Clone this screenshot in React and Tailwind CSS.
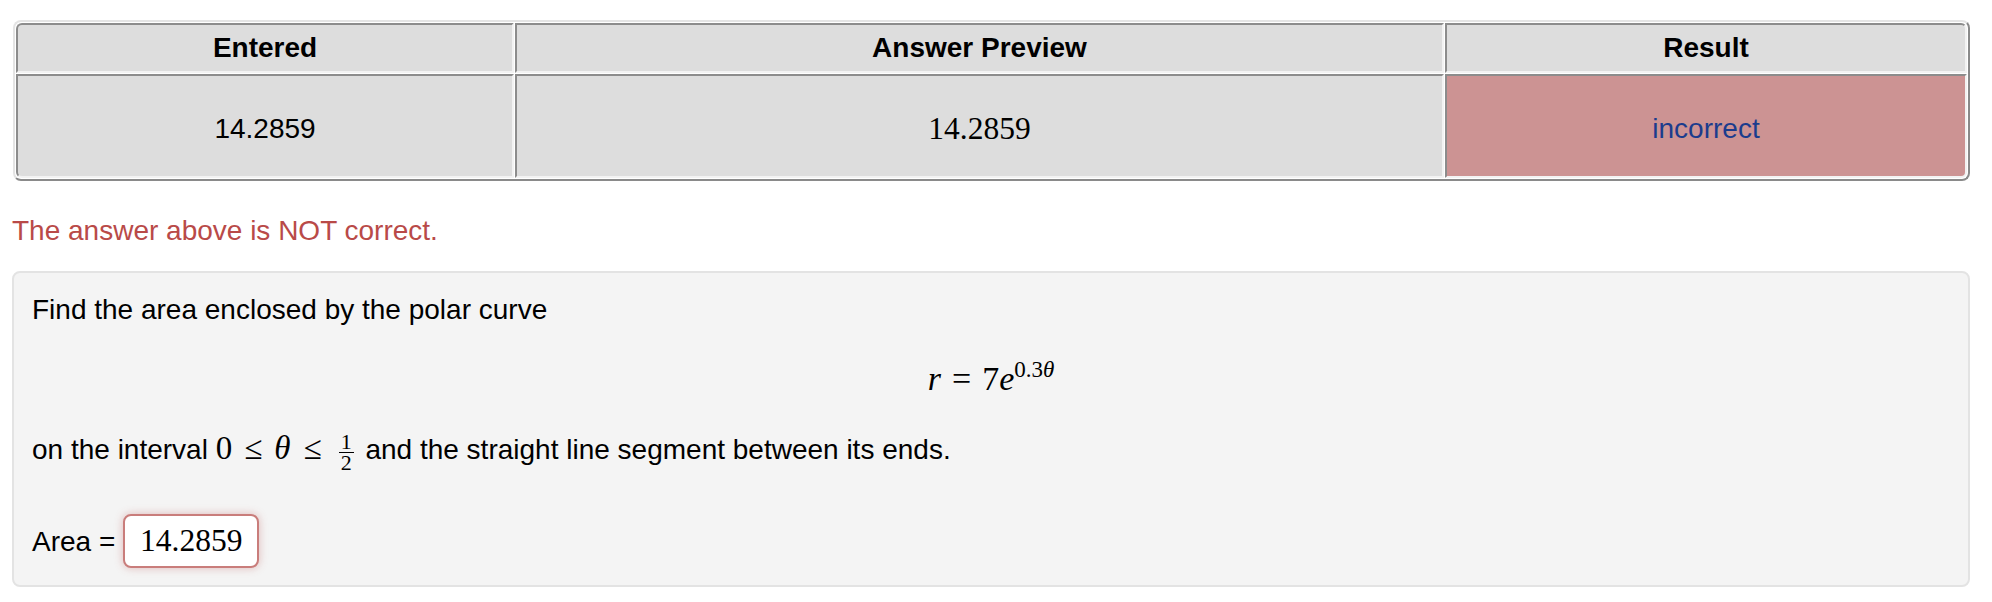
import React from 'react';

// attempt results + problem text, drawn at 2x scale
export default function App() {
  const cell =
    'border-2 border-t-[#8c8c8c] border-l-[#8c8c8c] border-r-[#f2f2f2] border-b-[#f2f2f2] bg-[#dddddd] text-center align-middle p-0';

  return (
    <div className="min-h-screen bg-white pt-[20px] pl-[12px] pr-[22px] font-['Liberation_Sans',Arial,sans-serif] text-[28px] leading-[40px] text-black">
      <table className="ml-[1px] w-[1957px] table-fixed border-separate border-spacing-[1px] rounded-[8px] border-2 border-t-[#e4e4e4] border-l-[#e4e4e4] border-r-[#8a8a8a] border-b-[#8a8a8a]">
        <thead>
          <tr>
            <th className={`${cell} w-[498px] h-[50px] font-bold rounded-tl-[6px]`}>Entered</th>
            <th className={`${cell} w-[929px] h-[50px] font-bold`}>Answer Preview</th>
            <th className={`${cell} h-[50px] font-bold rounded-tr-[6px]`}>Result</th>
          </tr>
        </thead>
        <tbody>
          <tr>
            <td className={`${cell} h-[104px] pt-[6px] rounded-bl-[6px]`}>14.2859</td>
            <td className={`${cell} h-[104px] pt-[6px] font-['Liberation_Serif',serif] text-[31.5px]`}>14.2859</td>
            <td className={`${cell} h-[104px] pt-[6px] !bg-[#cc9393] text-[#1b3c8d] rounded-br-[6px]`}>incorrect</td>
          </tr>
        </tbody>
      </table>

      <div className="mt-[30px] text-[#b94a48]">The answer above is NOT correct.</div>

      <div className="mt-[20px] rounded-[8px] border-2 border-[#e3e3e3] bg-[#f4f4f4] pt-[17px] pb-[17px] px-[18px]">
        <p>Find the area enclosed by the polar curve</p>

        <div className="mt-[19px] h-[60px] leading-[60px] text-center font-['Liberation_Serif',serif] text-[34px]">
          <span className="italic">r</span>
          <span className="mx-[11px]">=</span>
          <span>7</span>
          <span className="italic">e</span>
          <span className="relative -top-[13px] text-[23px]">
            0.3<span className="italic">θ</span>
          </span>
        </div>

        <p className="mt-[21px]">
          on the interval{' '}
          <span className="font-['Liberation_Serif',serif] text-[33px] leading-none">
            0<span className="mx-[12px]">≤</span>
            <span className="italic">θ</span>
            <span className="mx-[13px]">≤</span>
          </span>
          <span className="inline-flex flex-col items-center align-middle relative top-[1px] mx-[4px] font-['Liberation_Serif',serif] text-[22px] leading-[16px]">
            <span className="px-[2px] pb-[2px]">1</span>
            <span className="w-full border-t-[1.5px] border-black px-[2px] pt-[2px] text-center">2</span>
          </span>{' '}
          and the straight line segment between its ends.
        </p>

        <p className="mt-[44px]">
          Area ={' '}
          <span className="inline-block h-[54px] w-[136px] rounded-[8px] border-2 border-[#c97d7b] bg-white pl-[15px] font-['Liberation_Serif',serif] text-[31.5px] leading-[50px] shadow-[0_0_8px_rgba(185,74,72,0.35)]">
            14.2859
          </span>
        </p>
      </div>
    </div>
  );
}
